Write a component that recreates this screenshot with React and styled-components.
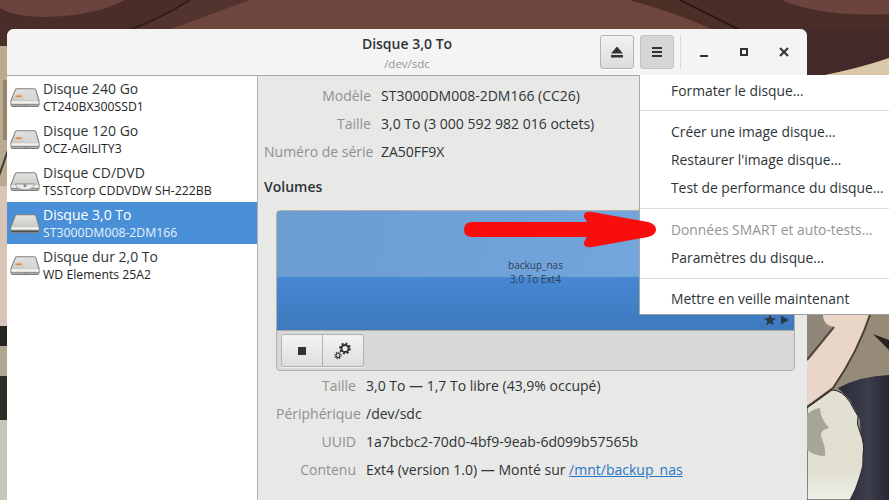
import React from "react";
import styled, { createGlobalStyle } from "styled-components";

const Global = createGlobalStyle`
  html, body { margin: 0; padding: 0; background: #4a2d29; }
  body { font-family: "Open Sans", "Noto Sans", sans-serif; color: #2e3436; }
`;
const Desktop = styled.div`position: relative; width: 889px; height: 500px; overflow: hidden;`;
const WallpaperSvg = styled.svg`position: absolute; inset: 0; display: block;`;
const ArrowSvg = styled.svg`position: absolute; left: 460px; top: 205px; filter: blur(0.5px);`;
const Win = styled.div`
  position: absolute; left: 7px; top: 29px; width: 800px; height: 471px;
  display: flex; flex-direction: column; background: #e8e8e7;
  border-radius: 7px 7px 0 0; overflow: hidden;
`;
const Header = styled.header`
  position: relative; height: 46px; flex: none; background: #f4f4f4; border-bottom: 1px solid #a9a9a7;
  display: flex; align-items: center; justify-content: flex-end; padding-right: 3px;
`;
const TitleBox = styled.div`
  position: absolute; left: 0; right: 0; top: 5px; display: flex; flex-direction: column; align-items: center;
`;
const Title = styled.div`font-size: 14px; font-weight: 600; line-height: 20px; color: #2e3436;`;
const Subtitle = styled.div`font-size: 11.5px; line-height: 16px; color: #929595; margin-top: 2px;`;
const HeadButton = styled.div`
  width: 34px; height: 34px; box-sizing: border-box; border-radius: 3px; margin-right: 6px;
  display: flex; align-items: center; justify-content: center; color: #2e3436;
  border: 1px solid ${p => p.$active ? "#c4c4c2" : "#b4b4b2"};
  background: ${p => p.$active ? "#d6d6d4" : "linear-gradient(#f2f2f1, #dcdcda)"};
  box-shadow: ${p => p.$active ? "none" : "0 1px 0 #fff"};
`;
const HeadSep = styled.div`width: 1px; height: 34px; background: #dcdcda; margin-right: 3px;`;
const WinButton = styled.div`
  width: 40px; height: 34px; display: flex; align-items: center; justify-content: center;
`;
const Main = styled.div`flex: 1; display: flex; min-height: 0;`;
const Sidebar = styled.nav`
  width: 250px; flex: none; background: #fff; border-right: 1px solid #afafad;
`;
const Row = styled.div`
  height: 42px; display: flex; align-items: center; padding-left: 3px; box-sizing: border-box;
  background: ${p => p.$selected ? "#4a90d9" : "transparent"};
  color: ${p => p.$selected ? "#fff" : "#2e3436"};
`;
const RowText = styled.div`margin-left: 3px; padding-bottom: 1px; display: flex; flex-direction: column;`;
const RowName = styled.div`font-size: 14px; line-height: 19px;`;
const RowModel = styled.div`font-size: 12.25px; line-height: 16px; margin-top: 1px; ${p => p.$selected ? "color:#e9f1fa;" : "color:#1f2324;"}`;
const Content = styled.main`flex: 1; padding: 5px 0 0 6px; min-width: 0;`;
const InfoGrid = styled.div`
  display: grid; grid-template-columns: ${p => p.$col}px auto; column-gap: 10px; grid-auto-rows: 28px; align-items: center;
  margin-left: ${p => p.$indent || 0}px;
`;
const Label = styled.div`font-size: 14px; text-align: right; color: #8e9192; white-space: nowrap;`;
const Value = styled.div`font-size: 14px; color: #2e3436; white-space: nowrap;`;
const Link = styled.a`color: #2a76c6; text-decoration: underline;`;
const Heading = styled.div`font-size: 14px; font-weight: 600; line-height: 20px; margin: 12px 0 13px; color: #2e3436;`;
const VolumeBox = styled.section`
  margin-left: 12px; width: 519px; height: 161px; box-sizing: border-box; border: 1px solid #b0b0ae;
  border-radius: 4px; overflow: hidden; display: flex; flex-direction: column; background: #d8d8d6;
`;
const Partition = styled.div`
  position: relative; height: 119px; flex: none; display: flex; flex-direction: column;
  border-bottom: 1px solid #a9a9a7; box-sizing: content-box;
`;
const Gloss = styled.div`height: 66px; background: linear-gradient(100deg, #6b9dd1, #76a9e2);`;
const Deep = styled.div`flex: 1; background: linear-gradient(#4788d2, #3d79bd);`;
const PartLabel = styled.div`
  position: absolute; left: 0; right: 0; top: 47px; text-align: center; font-size: 10px; line-height: 14px; color: #2d3f55;
`;
const Flags = styled.svg`position: absolute; right: 4px; bottom: 4px;`;
const VolumeBar = styled.div`flex: 1; padding: 3px 4px; display: flex;`;
const Linked = styled.div`
  display: flex; height: 33px; box-sizing: border-box; border: 1px solid #b2b2b0; border-radius: 3px;
  background: linear-gradient(#f3f3f2, #dededc); box-shadow: 0 1px 0 #eee;
`;
const LinkedButton = styled.div`
  width: 40px; display: flex; align-items: center; justify-content: center;
  & + & { border-left: 1px solid #b2b2b0; }
`;
const Stop = styled.div`width: 8px; height: 8px; background: #2e3436;`;
const Menu = styled.div`
  position: absolute; left: 639px; top: 75px; width: 260px; height: 240px; box-sizing: border-box;
  background: #fff; border-left: 1px solid #a8a8a6; border-bottom: 1px solid #9e9e9c;
  padding-top: 1px; display: flex; flex-direction: column;
`;
const MenuItem = styled.div`
  height: 28.25px; flex: none; padding-left: 31px; display: flex; align-items: center; font-size: 13.85px;
  color: ${p => p.$disabled ? "#929595" : "#2e3436"};
`;
const MenuSep = styled.div`height: 1px; flex: none; background: #dcdcdc; margin: 6px 0;`;

const disks = [
  { name: "Disque 240 Go", model: "CT240BX300SSD1", kind: "ssd" },
  { name: "Disque 120 Go", model: "OCZ-AGILITY3", kind: "ssd" },
  { name: "Disque CD/DVD", model: "TSSTcorp CDDVDW SH-222BB", kind: "cd" },
  { name: "Disque 3,0 To", model: "ST3000DM008-2DM166", kind: "hdd", selected: true },
  { name: "Disque dur 2,0 To", model: "WD Elements 25A2", kind: "ssd" },
];

function DiskIcon({ kind }) {
  const id = `g-${kind}`;
  return (
    <svg width="30" height="25" viewBox="2 0 28 24">
      <defs>
        <linearGradient id={id} x1="0" y1="0" x2="0" y2="1">
          <stop offset="0" stopColor="#e6e6e4" />
          <stop offset="1" stopColor="#bdbdba" />
        </linearGradient>
      </defs>
      <path d="M8 3.5 H25 Q26 3.5 26.5 5 L29.5 15 V19 Q29.5 20.5 28 20.5 H4 Q2.5 20.5 2.5 19 V15 L6.5 5 Q7 3.5 8 3.5 Z"
        fill={`url(#${id})`} stroke="#7d7d7a" strokeWidth="1" />
      <path d="M3 15.5 H29 V18.5 H3 Z" fill="#f3f3f1" />
      <path d="M3 18.6 H29" stroke="#8c8c89" strokeWidth="1" />
      {kind === "ssd" && <>
        <path d="M15 5 H25 L27.5 14.5 H16 Z" fill="#d9d9d7" />
        <rect x="7" y="10" width="6" height="1.6" fill="#e8853a" />
        <circle cx="17" cy="19.5" r=".6" fill="#666" />
      </>}
      {kind === "cd" && <>
        <path d="M6 14.5 H26" stroke="#9a9a97" strokeWidth=".8" />
        <path d="M7 14.5 A9 5.5 0 0 0 25 14.5 Z" fill="#ececea" stroke="#8a8a87" strokeWidth=".7" />
        <circle cx="16" cy="16" r="1.5" fill="#8a8a87" />
      </>}
      {kind === "hdd" && <path d="M3 19.5 H29" stroke="#333" strokeWidth="1" />}
    </svg>
  );
}

function Wallpaper() {
  return (
    <WallpaperSvg width="889" height="500" viewBox="0 0 889 500">
      <defs>
        <linearGradient id="cream" x1="0" y1="0" x2="0" y2="1">
          <stop offset="0" stopColor="#e2e0d2" />
          <stop offset=".7" stopColor="#e0dfd0" />
          <stop offset="1" stopColor="#f0efe6" />
        </linearGradient>
        <linearGradient id="navy" x1="0" y1="0" x2="1" y2="0">
          <stop offset="0" stopColor="#2a2b38" />
          <stop offset=".6" stopColor="#3b3d4b" />
          <stop offset="1" stopColor="#282833" />
        </linearGradient>
      </defs>
      <rect width="889" height="500" fill="#4a2d29" />
      {/* top strands */}
      <path d="M0 0 H125 Q95 16 45 17 Q15 17 0 8 Z" fill="#6a443d" />
      <path d="M190 0 H250 Q200 18 165 30 H130 Z" fill="#53332d" />
      <path d="M250 0 H630 Q680 14 714 30 H168 Q205 16 250 0 Z" fill="#6e463e" />
      <path d="M190 0 Q165 16 130 30" stroke="#2f1c19" strokeWidth="2" fill="none" />
      <path d="M630 0 Q680 14 714 30 H740 L680 0 Z" fill="#4b2f27" />
      <path d="M680 0 Q712 16 740 30" stroke="#2a1815" strokeWidth="2" fill="none" />
      <path d="M782 0 H889 V14 Q850 16 815 10 Q795 6 782 0 Z" fill="#6a443d" />
      <rect x="807" y="30" width="82" height="46" fill="#43292a" />
      <path d="M820 76 Q860 68 889 58 V80 H820 Z" fill="#d8c8a8" />
      {/* left strip */}
      <rect x="0" y="30" width="8" height="16" fill="#4a2f2a" />
      <rect x="0" y="46" width="8" height="140" fill="#baab90" />
      <rect x="3" y="80" width="4" height="60" fill="#93876f" />
      <rect x="0" y="186" width="8" height="140" fill="#d8c5b8" />
      <path d="M0 170 L7 150 V156 L0 176 Z" fill="#3f3a30" />
      <rect x="0" y="326" width="8" height="20" fill="#26241e" />
      <rect x="0" y="346" width="8" height="30" fill="#b0a88f" />
      <rect x="0" y="376" width="8" height="44" fill="#2e2d28" />
      <rect x="0" y="420" width="8" height="80" fill="#c6c5ba" />
      {/* right scene */}
      <rect x="807" y="315" width="82" height="185" fill="#958b78" />
      <path d="M807 315 H824 Q822 335 834 327 L807 360 Z" fill="#8f8578" />
      <path d="M823 312 H871 Q860 350 833 388 L807 407 V360 L834 327 Q822 325 823 312 Z" fill="#ead6c9" />
      <path d="M834 327 L807 360" stroke="#54463c" strokeWidth="2" fill="none" />
      <path d="M871 312 Q858 352 833 388 L807 407" stroke="#4a3d33" strokeWidth="2" fill="none" />
      <path d="M873 334 L889 340 V350 Z" fill="#27221f" />
      <path d="M838 388 Q860 376 889 375 V500 H845 L862 470 L860 420 L850 400 Z" fill="url(#navy)" />
      <path d="M832 390 Q842 390 850 402 Q854 410 858 416 Q856 424 860 432 Q865 444 863 455 Q864 466 860 476 Q856 490 850 500 H807 V408 Z" fill="url(#cream)" stroke="#24242c" strokeWidth="1" />
      <path d="M807 414 Q815 408 820 408 Q820 418 829 428 Q820 430 821 436 Q826 448 825 456 Q815 456 807 450 Z" fill="#a6a598" />
    </WallpaperSvg>
  );
}

const GearPair = () => (
  <svg width="18" height="18" viewBox="0 0 18 18" fill="none" stroke="#2e3436">
    <circle cx="11" cy="6.5" r="3.6" strokeWidth="2" />
    <circle cx="11" cy="6.5" r="5" strokeWidth="1.8" strokeDasharray="1.9 2" />
    <circle cx="4" cy="13.5" r="2" strokeWidth="1.1" />
    <circle cx="4" cy="13.5" r="3.2" strokeWidth="1.2" strokeDasharray="1.2 1.3" />
  </svg>
);

export default function App() {
  return (
    <Desktop>
      <Global />
      <Wallpaper />
      <Win>
        <Header>
          <TitleBox>
            <Title>Disque 3,0 To</Title>
            <Subtitle>/dev/sdc</Subtitle>
          </TitleBox>
          <HeadButton>
            <svg width="14" height="14" viewBox="0 0 14 14" fill="#2e3436">
              <path d="M7 1.5 L13 8.5 H1 Z" /><rect x="1" y="10" width="12" height="2.5" />
            </svg>
          </HeadButton>
          <HeadButton $active>
            <svg width="12" height="12" viewBox="0 0 12 12" fill="#2e3436">
              <rect x="1" y="1" width="10" height="2" /><rect x="1" y="5" width="10" height="2" /><rect x="1" y="9" width="10" height="2" />
            </svg>
          </HeadButton>
          <HeadSep />
          <WinButton>
            <svg width="10" height="10" viewBox="0 0 10 10" fill="#2e3436"><rect x="1" y="8" width="8" height="2" /></svg>
          </WinButton>
          <WinButton>
            <svg width="10" height="10" viewBox="0 0 10 10" fill="none" stroke="#2e3436" strokeWidth="2"><rect x="2" y="2" width="6" height="6" /></svg>
          </WinButton>
          <WinButton>
            <svg width="10" height="10" viewBox="0 0 10 10" stroke="#2e3436" strokeWidth="2"><path d="M1 1 L9 9 M9 1 L1 9" /></svg>
          </WinButton>
        </Header>
        <Main>
          <Sidebar>
            {disks.map(d => (
              <Row key={d.name} $selected={d.selected}>
                <DiskIcon kind={d.kind} />
                <RowText>
                  <RowName>{d.name}</RowName>
                  <RowModel $selected={d.selected}>{d.model}</RowModel>
                </RowText>
              </Row>
            ))}
          </Sidebar>
          <Content>
            <InfoGrid $col={107}>
              <Label>Modèle</Label><Value>ST3000DM008-2DM166 (CC26)</Value>
              <Label>Taille</Label><Value>3,0 To (3 000 592 982 016 octets)</Value>
              <Label>Numéro de série</Label><Value>ZA50FF9X</Value>
            </InfoGrid>
            <Heading>Volumes</Heading>
            <VolumeBox>
              <Partition>
                <Gloss />
                <Deep />
                <PartLabel>backup_nas<br />3,0 To Ext4</PartLabel>
                <Flags width="26" height="12" viewBox="0 0 26 12" fill="#2b3848">
                  <path d="M6 0 L7.6 4 L12 4.3 L8.6 7 L9.8 11.3 L6 9 L2.2 11.3 L3.4 7 L0 4.3 L4.4 4 Z" />
                  <path d="M17 1.5 L25 6 L17 10.5 Z" />
                </Flags>
              </Partition>
              <VolumeBar>
                <Linked>
                  <LinkedButton><Stop /></LinkedButton>
                  <LinkedButton><GearPair /></LinkedButton>
                </Linked>
              </VolumeBar>
            </VolumeBox>
            <InfoGrid $col={80} $indent={12}>
              <Label>Taille</Label><Value>3,0 To — 1,7 To libre (43,9% occupé)</Value>
              <Label>Périphérique</Label><Value>/dev/sdc</Value>
              <Label>UUID</Label><Value>1a7bcbc2-70d0-4bf9-9eab-6d099b57565b</Value>
              <Label>Contenu</Label><Value>Ext4 (version 1.0) — Monté sur <Link>/mnt/backup_nas</Link></Value>
            </InfoGrid>
          </Content>
        </Main>
      </Win>
      <Menu>
        <MenuItem>Formater le disque…</MenuItem>
        <MenuSep />
        <MenuItem>Créer une image disque…</MenuItem>
        <MenuItem>Restaurer l'image disque…</MenuItem>
        <MenuItem>Test de performance du disque…</MenuItem>
        <MenuSep />
        <MenuItem $disabled>Données SMART et auto-tests…</MenuItem>
        <MenuItem>Paramètres du disque…</MenuItem>
        <MenuSep />
        <MenuItem>Mettre en veille maintenant</MenuItem>
      </Menu>
      <ArrowSvg width="200" height="50" viewBox="0 0 200 50">
        <path d="M12 17 H127 L124 12 Q123 6 132 7 L188 17 Q196 19 196 24.5 Q196 30 188 32 L132 42 Q123 43 124 37 L127 32 H12 Q4 32 4 24.5 Q4 17 12 17 Z" fill="#f90d0d" />
      </ArrowSvg>
    </Desktop>
  );
}
